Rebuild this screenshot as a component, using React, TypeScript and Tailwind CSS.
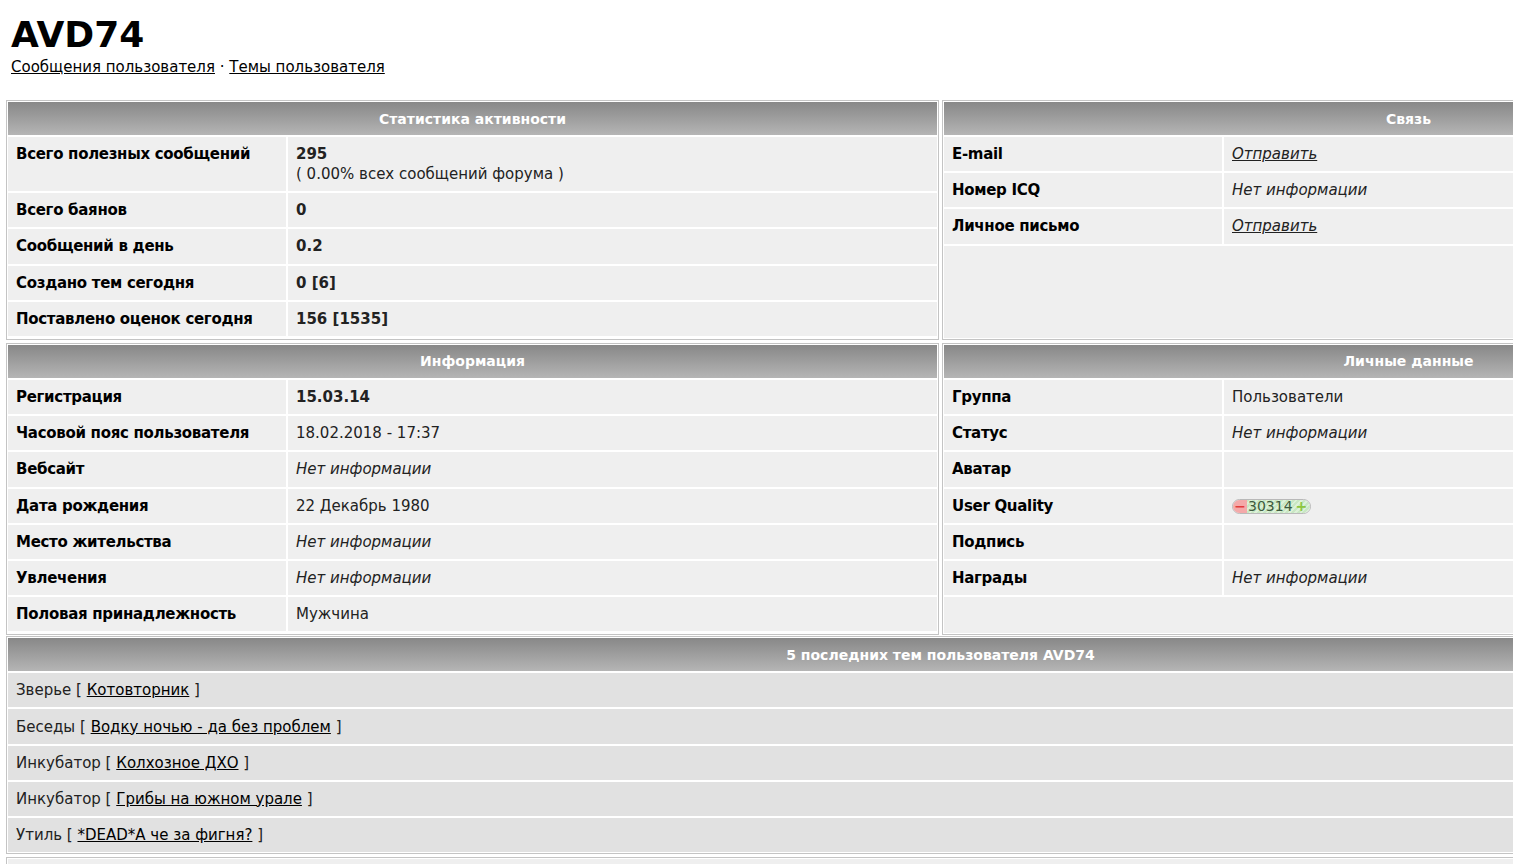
import React from "react";

type Row = { label: string; value: React.ReactNode };

const font = "font-['DejaVu_Sans','Verdana',sans-serif]";

const stats: Row[] = [
  {
    label: "Всего полезных сообщений",
    value: (
      <>
        <b>295</b>
        <br />( 0.00% всех сообщений форума )
      </>
    ),
  },
  { label: "Всего баянов", value: <b>0</b> },
  { label: "Сообщений в день", value: <b>0.2</b> },
  { label: "Создано тем сегодня", value: <b>0 [6]</b> },
  { label: "Поставлено оценок сегодня", value: <b>156 [1535]</b> },
];

const noInfo = <i>Нет информации</i>;
const send = (
  <a href="#" className="italic underline">
    Отправить
  </a>
);

const contacts: Row[] = [
  { label: "E-mail", value: send },
  { label: "Номер ICQ", value: noInfo },
  { label: "Личное письмо", value: send },
];

const info: Row[] = [
  { label: "Регистрация", value: <b>15.03.14</b> },
  { label: "Часовой пояс пользователя", value: "18.02.2018 - 17:37" },
  { label: "Вебсайт", value: noInfo },
  { label: "Дата рождения", value: "22 Декабрь 1980" },
  { label: "Место жительства", value: noInfo },
  { label: "Увлечения", value: noInfo },
  { label: "Половая принадлежность", value: "Мужчина" },
];

function Quality({ score }: { score: number }) {
  return (
    <span className="inline-flex h-[15px] items-center overflow-hidden rounded-full border border-[#b9b9b9] align-middle text-[14px] leading-none">
      <span className="flex h-full w-[14px] items-center justify-center bg-[#f4a9a9] font-bold text-[#e23c3c]">
        −
      </span>
      <span className="flex h-full items-center bg-[repeating-linear-gradient(135deg,#c9e7c4_0px,#c9e7c4_2px,#dcf1d8_2px,#dcf1d8_4px)] pr-[3px] pl-[1px] text-[#3d5a3d]">
        {score}
        <span className="ml-[3px] font-bold text-[#8cc63f]">+</span>
      </span>
    </span>
  );
}

const personal: Row[] = [
  { label: "Группа", value: "Пользователи" },
  { label: "Статус", value: noInfo },
  { label: "Аватар", value: "" },
  { label: "User Quality", value: <Quality score={30314} /> },
  { label: "Подпись", value: "" },
  { label: "Награды", value: noInfo },
];

const topics = [
  ["Зверье", "Котовторник"],
  ["Беседы", "Водку ночью - да без проблем"],
  ["Инкубатор", "Колхозное ДХО"],
  ["Инкубатор", "Грибы на южном урале"],
  ["Утиль", "*DEAD*А че за фигня?"],
];

function Header({ children }: { children: React.ReactNode }) {
  return (
    <div className="bg-linear-to-b from-[#888888] to-[#b5b5b5] py-[7.5px] text-center text-[14px] leading-[18px] font-bold text-white">
      {children}
    </div>
  );
}

function Panel({ title, rows }: { title: string; rows: Row[] }) {
  return (
    <div className="flex flex-col gap-[2px] border border-[#c4c4c4] bg-white p-px">
      <Header>{title}</Header>
      {rows.map((r) => (
        <div key={r.label} className="grid grid-cols-[278px_1fr] gap-[2px]">
          <div className="bg-[#efefef] px-[8px] py-[7.1px] font-bold tracking-[-0.3px] text-black">{r.label}</div>
          <div className="bg-[#efefef] px-[8px] py-[7.1px] text-[#222]">{r.value}</div>
        </div>
      ))}
      {/* fills the shorter column down to the neighbour's height */}
      <div className="flex-1 bg-[#efefef]" />
    </div>
  );
}

export default function App() {
  return (
    <div className={`h-screen w-screen overflow-hidden bg-white ${font} text-[15px] leading-[20px] text-black`}>
      <div className="w-[1881px]">
        <div className="pl-[11px]">
          <h1 className="mt-[17px] text-[36px] leading-[36px] font-bold">AVD74</h1>
          <div className="mt-[4px]">
            <a href="#" className="underline">
              Сообщения пользователя
            </a>
            {" · "}
            <a href="#" className="underline">
              Темы пользователя
            </a>
          </div>
        </div>

        <div className="mt-[23px] px-[6px]">
          <div className="grid grid-cols-2 gap-[3px]">
            <Panel title="Статистика активности" rows={stats} />
            <Panel title="Связь" rows={contacts} />
          </div>
          <div className="mt-[3px] grid grid-cols-2 gap-[3px]">
            <Panel title="Информация" rows={info} />
            <Panel title="Личные данные" rows={personal} />
          </div>

          <div className="mt-px flex flex-col gap-[2px] border border-[#c4c4c4] bg-white p-px">
            <Header>5 последних тем пользователя AVD74</Header>
            {topics.map(([forum, topic]) => (
              <div key={topic} className="bg-[#e1e1e1] px-[8px] py-[7.1px] text-[#222]">
                {forum} [{" "}
                <a href="#" className="text-black underline">
                  {topic}
                </a>{" "}
                ]
              </div>
            ))}
          </div>

          <div className="mt-[3px] flex flex-col gap-[2px] border border-[#c4c4c4] bg-white p-px">
            <div className="bg-[#efefef] px-[8px] py-[7.1px]">&nbsp;</div>
            <div className="bg-[#efefef] px-[8px] py-[7.1px]">&nbsp;</div>
          </div>
        </div>
      </div>
    </div>
  );
}
